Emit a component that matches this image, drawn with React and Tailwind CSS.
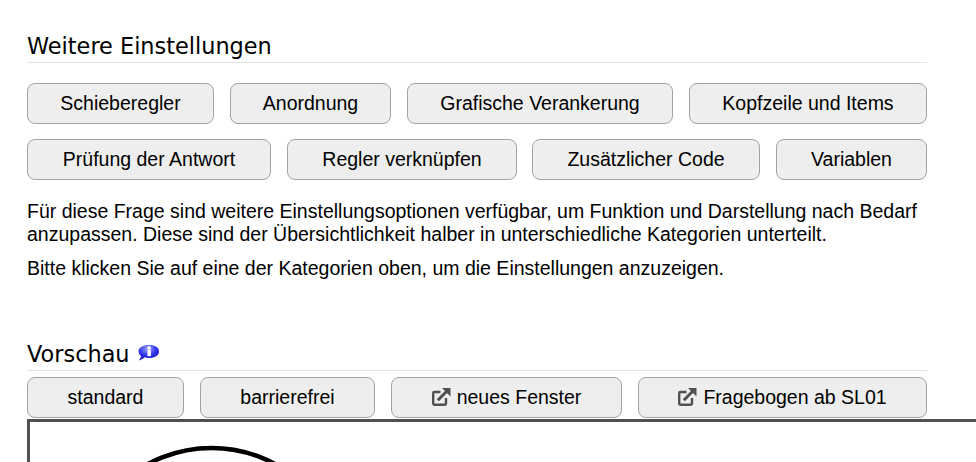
const Ext = () => (
  <svg width="20" height="20" viewBox="0 0 20 20" className="shrink-0 -translate-x-px -translate-y-px" fill="none">
    <path d="M9.5 5H3.4Q2.2 5 2.2 6.2V16.6Q2.2 17.8 3.4 17.8H13.8Q15 17.8 15 16.6V11" stroke="#505050" strokeWidth="2.4" />
    <path d="M6.8 13.2L15.5 4.5" stroke="#505050" strokeWidth="3" />
    <path d="M11 1H19.5V9.5Z" fill="#505050" />
  </svg>
);

const Btn = ({ w, ext, children }) => (
  <button className={`${w} h-[41px] shrink-0 flex items-center justify-center gap-[5px] rounded-lg border border-[#a3a3a3] bg-[#eeeeee] text-[19.5px] text-black`}>
    {ext && <Ext />}
    <span>{children}</span>
  </button>
);

const Info = () => (
  <svg width="23" height="18" viewBox="0 0 23 18" className="ml-[7px] mb-[5px]">
    <defs>
      <radialGradient id="g" cx="45%" cy="25%" r="75%">
        <stop offset="0" stopColor="#9aa4ff" />
        <stop offset="0.6" stopColor="#2b2de8" />
        <stop offset="1" stopColor="#1a1ac0" />
      </radialGradient>
    </defs>
    <path d="M12 1C18 1 22 3.6 22 7.5S18 14 12 14C10 14 8.6 13.8 7.4 13.3C6 15 4 16 1.5 16.5C3 15.2 3.8 13.8 4 12C2.6 10.8 1.5 9.3 1.5 7.5C1.5 3.6 6 1 12 1Z" fill="url(#g)" />
    <rect x="10.5" y="6" width="3.4" height="6.2" fill="#fff" />
    <circle cx="12.2" cy="3.9" r="1.8" fill="#fff" />
  </svg>
);

export default function App() {
  return (
    <div className="h-[462px] w-[976px] overflow-hidden bg-white font-['Liberation_Sans',sans-serif] text-black">
      <div className="pl-[27px] pt-[33px] w-[927px]">
        <h2 className="h-[30px] border-b border-[#e2e2e2] font-['DejaVu_Sans',sans-serif] text-[22.4px] leading-[26px]">
          Weitere Einstellungen
        </h2>
        <div className="mt-[20px] flex gap-4">
          <Btn w="w-[187px]">Schieberegler</Btn>
          <Btn w="w-[161px]">Anordnung</Btn>
          <Btn w="w-[266px]">Grafische Verankerung</Btn>
          <Btn w="w-[238px]">Kopfzeile und Items</Btn>
        </div>
        <div className="mt-[15px] flex gap-4">
          <Btn w="w-[244px]">Prüfung der Antwort</Btn>
          <Btn w="w-[230px]">Regler verknüpfen</Btn>
          <Btn w="-ml-px w-[228px]">Zusätzlicher Code</Btn>
          <Btn w="w-[151px]">Variablen</Btn>
        </div>
        <p className="mt-[20px] text-[19.5px] leading-[23px]">
          Für diese Frage sind weitere Einstellungsoptionen verfügbar, um Funktion und Darstellung nach Bedarf
          <br />
          anzupassen. Diese sind der Übersichtlichkeit halber in unterschiedliche Kategorien unterteilt.
        </p>
        <p className="mt-[11px] text-[19.5px] leading-[23px]">
          Bitte klicken Sie auf eine der Kategorien oben, um die Einstellungen anzuzeigen.
        </p>
        <h2 className="mt-[58px] h-[33px] pt-[2px] border-b border-[#e2e2e2] flex items-center font-['DejaVu_Sans',sans-serif] text-[22.4px]">
          Vorschau
          <Info />
        </h2>
        <div className="mt-[6px] flex gap-4">
          <Btn w="w-[157px]">standard</Btn>
          <Btn w="w-[175px]">barrierefrei</Btn>
          <Btn w="w-[231px]" ext>neues Fenster</Btn>
          <Btn w="w-[289px]" ext>Fragebogen ab SL01</Btn>
        </div>
      </div>
      <div className="ml-[27px] mt-px h-[120px] w-[949px] border-[3px] border-r-0 border-[#505050] overflow-hidden">
        <svg width="946" height="114" className="block">
          <circle cx="181.5" cy="160" r="134" fill="none" stroke="#000" strokeWidth="4.5" />
        </svg>
      </div>
    </div>
  );
}
